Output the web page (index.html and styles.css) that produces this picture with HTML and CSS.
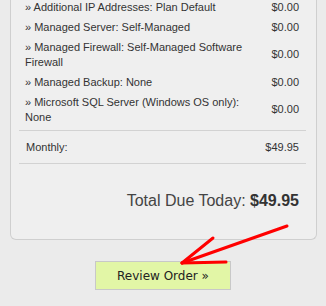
FILE: index.html
```html
<!DOCTYPE html>
<html>
<head>
<meta charset="utf-8">
<link rel="stylesheet" href="styles.css">
</head>
<body>
<div class="panel">
  <div class="items">
    <div class="row"><span class="desc">» Additional IP Addresses: Plan Default</span><span class="amt">$0.00</span></div>
    <div class="row"><span class="desc">» Managed Server: Self-Managed</span><span class="amt">$0.00</span></div>
    <div class="row"><span class="desc">» Managed Firewall: Self-Managed Software Firewall</span><span class="amt">$0.00</span></div>
    <div class="row"><span class="desc">» Managed Backup: None</span><span class="amt">$0.00</span></div>
    <div class="row"><span class="desc">» Microsoft SQL Server (Windows OS only): None</span><span class="amt">$0.00</span></div>
  </div>
  <div class="monthly"><span>Monthly:</span><span>$49.95</span></div>
  <div class="total">Total Due Today: <b>$49.95</b></div>
</div>
<div class="actions">
  <button class="review">Review Order »</button>
</div>
<svg class="arrow" width="326" height="306" viewBox="0 0 326 306">
  <g stroke="#ff0000" stroke-width="3" stroke-linecap="round" fill="none">
    <line x1="287" y1="226" x2="182" y2="263"/>
    <line x1="213" y1="238" x2="182" y2="263"/>
    <line x1="182" y1="263" x2="226" y2="262"/>
  </g>
</svg>
</body>
</html>
```
FILE: styles.css
```css
html, body {
  margin: 0;
  padding: 0;
}
body {
  background: #ebebeb;
  font-family: "Liberation Sans", Arial, sans-serif;
  color: #333;
  width: 326px;
  height: 306px;
  overflow: hidden;
  position: relative;
}
.panel {
  margin: -3px 9px 0 10px;
  background: #efefef;
  border: 1px solid #cfcfcf;
  border-top: none;
  border-radius: 0 0 6px 6px;
  padding: 0 10px 0 8px;
  height: 243px;
  box-sizing: border-box;
}
.items {
  border-bottom: 1px solid #d2d2d2;
  padding-bottom: 3px;
}
.row {
  display: grid;
  grid-template-columns: 1fr auto;
  align-items: center;
  column-gap: 10px;
  font-size: 11px;
  line-height: 15px;
  padding: 2.5px 7px 2.5px 6px;
}
.monthly {
  display: flex;
  justify-content: space-between;
  align-items: center;
  font-size: 11px;
  height: 32px;
  padding: 0 7px 0 7px;
  border-bottom: 1px solid #d2d2d2;
}
.total {
  text-align: right;
  font-size: 16px;
  color: #444;
  padding: 28px 7px 0 0;
  line-height: 18px;
}
.total b {
  font-weight: bold;
  color: #333;
}
.actions {
  display: flex;
  justify-content: center;
  padding-top: 21px;
}
.review {
  width: 136px;
  height: 29px;
  background: #e2f6a6;
  border: 1px solid #c8c8c8;
  font-family: "DejaVu Sans", Tahoma, sans-serif;
  font-size: 12px;
  color: #222;
  padding: 0;
}
.arrow {
  position: absolute;
  left: 0;
  top: 0;
  pointer-events: none;
}
```
